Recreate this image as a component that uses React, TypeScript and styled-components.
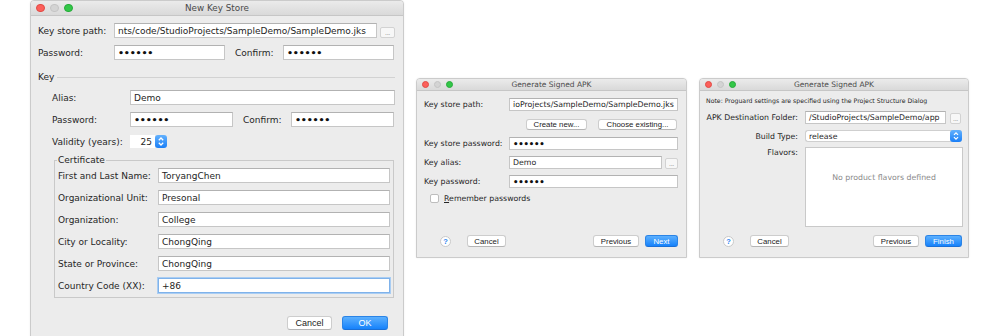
import styled, { createGlobalStyle, css } from "styled-components";

const GlobalStyle = createGlobalStyle`
  html, body {
    margin: 0;
    background: #fff;
  }
  body {
    font-family: "DejaVu Sans", "Liberation Sans", sans-serif;
    color: #262626;
  }
`;

const Lights = ({ size, gap, left }: { size: number; gap: number; left: number }) => (
  <LightRow $gap={gap} $left={left}>
    <Light $size={size} $color="#fc605b" $edge="#e04a45" />
    <Light $size={size} $color="#d4d4d4" $edge="#c4c4c4" />
    <Light $size={size} $color="#33c748" $edge="#27aa3b" />
  </LightRow>
);

const StepperIcon = ({ w, h }: { w: number; h: number }) => (
  <svg width={w} height={h} viewBox="0 0 12 13">
    <path d="M3.8 5.2 L6 3 L8.2 5.2" fill="none" stroke="#fff" strokeWidth="1.3" />
    <path d="M3.8 7.8 L6 10 L8.2 7.8" fill="none" stroke="#fff" strokeWidth="1.3" />
  </svg>
);

const NewKeyStore = () => (
  <Window $w={374} $h={337} $top={0} $fs={9}>
    <TitleBar $h={15}>
      <Lights size={8.5} gap={5.5} left={5} />
      <Title $fs={8.8}>New Key Store</Title>
    </TitleBar>
    <Row $mt={7}>
      <Label $w={76}>Key store path:</Label>
      <Field>nts/code/StudioProjects/SampleDemo/SampleDemo.jks</Field>
      <Browse $w={15} $h={11} $ml={3}>...</Browse>
    </Row>
    <Row $mt={7} $pr={9}>
      <Label $w={76}>Password:</Label>
      <Field $w={111}>
        <Dots>••••••</Dots>
      </Field>
      <Label $w={48} $ml={10}>
        Confirm:
      </Label>
      <Field>
        <Dots>••••••</Dots>
      </Field>
    </Row>
    <Section>Key</Section>
    <Row $mt={6} $pl={21}>
      <Label $w={78}>Alias:</Label>
      <Field>Demo</Field>
    </Row>
    <Row $mt={7} $pl={21} $pr={9}>
      <Label $w={78}>Password:</Label>
      <Field $w={103}>
        <Dots>••••••</Dots>
      </Field>
      <Label $w={48} $ml={10}>
        Confirm:
      </Label>
      <Field>
        <Dots>••••••</Dots>
      </Field>
    </Row>
    <Row $mt={7} $pl={21} $h={15}>
      <Label $w={78}>Validity (years):</Label>
      <SpinField>25</SpinField>
      <Stepper $w={12} $h={13}>
        <StepperIcon w={12} h={13} />
      </Stepper>
    </Row>
    <Group>
      <Legend>Certificate</Legend>
      <Row $pl={0} $pr={0}>
        <Label $w={100}>First and Last Name:</Label>
        <Field>ToryangChen</Field>
      </Row>
      <Row $pl={0} $pr={0}>
        <Label $w={100}>Organizational Unit:</Label>
        <Field>Presonal</Field>
      </Row>
      <Row $pl={0} $pr={0}>
        <Label $w={100}>Organization:</Label>
        <Field>College</Field>
      </Row>
      <Row $pl={0} $pr={0}>
        <Label $w={100}>City or Locality:</Label>
        <Field>ChongQing</Field>
      </Row>
      <Row $pl={0} $pr={0}>
        <Label $w={100}>State or Province:</Label>
        <Field>ChongQing</Field>
      </Row>
      <Row $pl={0} $pr={0}>
        <Label $w={100}>Country Code (XX):</Label>
        <Field $focus>+86</Field>
      </Row>
    </Group>
    <ButtonRow $mt={18} $h={14} $pl={0} $pr={15}>
      <Spacer />
      <PushButton $w={45} $fs={9}>
        Cancel
      </PushButton>
      <PushButton $w={46} $fs={9} $ml={10} $primary>
        OK
      </PushButton>
    </ButtonRow>
  </Window>
);

const SignKeyStep = () => (
  <Window $w={271} $h={180} $top={78} $fs={7.8}>
    <TitleBar $h={12}>
      <Lights size={7} gap={5} left={4.5} />
      <Title $fs={7.5}>Generate Signed APK</Title>
    </TitleBar>
    <Row $mt={7} $h={13}>
      <Label $w={85}>Key store path:</Label>
      <Field>ioProjects/SampleDemo/SampleDemo.jks</Field>
    </Row>
    <ButtonRow $mt={8} $h={11} $pr={9}>
      <Spacer />
      <PushButton $w={61} $fs={7.8}>
        Create new...
      </PushButton>
      <PushButton $w={79} $fs={7.8} $ml={11}>
        Choose existing...
      </PushButton>
    </ButtonRow>
    <Row $mt={7} $h={13}>
      <Label $w={85}>Key store password:</Label>
      <Field>
        <Dots $small>••••••</Dots>
      </Field>
    </Row>
    <Row $mt={6} $h={13}>
      <Label $w={85}>Key alias:</Label>
      <Field>Demo</Field>
      <Browse $w={13} $h={11} $ml={3}>...</Browse>
    </Row>
    <Row $mt={6} $h={13}>
      <Label $w={85}>Key password:</Label>
      <Field>
        <Dots $small>••••••</Dots>
      </Field>
    </Row>
    <Row $mt={4} $h={12} $pl={13}>
      <Check />
      <CheckText>
        <u>R</u>emember passwords
      </CheckText>
    </Row>
    <ButtonRow $mt="auto" $h={12} $pl={23} $pr={8} $mb={10}>
      <Help>?</Help>
      <PushButton $w={39} $fs={7.8} $ml={16}>
        Cancel
      </PushButton>
      <Spacer />
      <PushButton $w={46} $fs={7.8}>
        Previous
      </PushButton>
      <PushButton $w={33} $fs={7.8} $ml={6} $primary>
        Next
      </PushButton>
    </ButtonRow>
  </Window>
);

const SignApkStep = () => (
  <Window $w={270} $h={180} $top={78} $fs={7.8}>
    <TitleBar $h={12}>
      <Lights size={7} gap={5} left={4.5} />
      <Title $fs={7.5}>Generate Signed APK</Title>
    </TitleBar>
    <Note>Note: Proguard settings are specified using the Project Structure Dialog</Note>
    <Row $mt={6} $h={13} $pl={6} $pr={7}>
      <Label $w={99} $right $padR={7}>
        APK Destination Folder:
      </Label>
      <Field>/StudioProjects/SampleDemo/app</Field>
      <Browse $w={11} $h={11} $ml={4}>...</Browse>
    </Row>
    <Row $mt={6} $h={12} $pl={6} $pr={6}>
      <Label $w={99} $right $padR={7}>
        Build Type:
      </Label>
      <Select>
        <SelectText>release</SelectText>
        <Stepper $w={12} $h={12}>
          <StepperIcon w={12} h={12} />
        </Stepper>
      </Select>
    </Row>
    <Row $mt={5} $h={80} $pl={6} $pr={5} $top>
      <Label $w={99} $right $padR={7} $lh={12}>
        Flavors:
      </Label>
      <FlavorBox>No product flavors defined</FlavorBox>
    </Row>
    <ButtonRow $mt="auto" $h={12} $pl={23} $pr={6} $mb={10}>
      <Help>?</Help>
      <PushButton $w={39} $fs={7.8} $ml={16}>
        Cancel
      </PushButton>
      <Spacer />
      <PushButton $w={46} $fs={7.8}>
        Previous
      </PushButton>
      <PushButton $w={37} $fs={7.8} $ml={6} $primary>
        Finish
      </PushButton>
    </ButtonRow>
  </Window>
);

const App = () => (
  <>
    <GlobalStyle />
    <Page>
      <NewKeyStore />
      <SignKeyStep />
      <SignApkStep />
    </Page>
  </>
);

const Page = styled.div`
  width: 1000px;
  height: 336px;
  box-sizing: border-box;
  padding-left: 30px;
  display: flex;
  align-items: flex-start;
  gap: 12px;
  overflow: hidden;
  background: #fff;
`;

const Window = styled.div<{ $w: number; $h: number; $top: number; $fs: number }>`
  width: ${p => p.$w}px;
  height: ${p => p.$h}px;
  margin-top: ${p => p.$top}px;
  flex-shrink: 0;
  box-sizing: border-box;
  display: flex;
  flex-direction: column;
  background: #ececec;
  border: 1px solid #cbcbcb;
  border-radius: 4px 4px 0 0;
  box-shadow: 0 0 2px rgba(0, 0, 0, 0.08);
  font-size: ${p => p.$fs}px;
  overflow: hidden;
`;

const TitleBar = styled.div<{ $h: number }>`
  height: ${p => p.$h}px;
  flex-shrink: 0;
  box-sizing: border-box;
  display: grid;
  grid-template-columns: 1fr auto 1fr;
  align-items: center;
  background: linear-gradient(#ebebeb, #d9d9d9);
  border-bottom: 1px solid #c6c6c6;
`;

const LightRow = styled.div<{ $gap: number; $left: number }>`
  display: flex;
  align-items: center;
  gap: ${p => p.$gap}px;
  margin-left: ${p => p.$left}px;
`;

const Light = styled.span<{ $size: number; $color: string; $edge: string }>`
  width: ${p => p.$size}px;
  height: ${p => p.$size}px;
  border-radius: 50%;
  box-sizing: border-box;
  background: ${p => p.$color};
  border: 0.5px solid ${p => p.$edge};
`;

const Title = styled.div<{ $fs: number }>`
  font-size: ${p => p.$fs}px;
  color: #4a4a4a;
  white-space: nowrap;
`;

const Row = styled.div<{
  $mt?: number | string;
  $h?: number;
  $pl?: number;
  $pr?: number;
  $top?: boolean;
}>`
  display: flex;
  align-items: ${p => (p.$top ? "flex-start" : "center")};
  flex-shrink: 0;
  height: ${p => p.$h ?? 15}px;
  margin-top: ${p => (typeof p.$mt === "string" ? p.$mt : `${p.$mt ?? 0}px`)};
  padding: 0 ${p => p.$pr ?? 8}px 0 ${p => p.$pl ?? 7}px;
`;

const ButtonRow = styled(Row)<{ $mb?: number }>`
  margin-bottom: ${p => p.$mb ?? 0}px;
`;

const Spacer = styled.div`
  flex: 1;
`;

const Label = styled.div<{ $w: number; $ml?: number; $right?: boolean; $padR?: number; $lh?: number }>`
  flex-shrink: 0;
  box-sizing: border-box;
  width: ${p => p.$w}px;
  margin-left: ${p => p.$ml ?? 0}px;
  padding-right: ${p => p.$padR ?? 0}px;
  text-align: ${p => (p.$right ? "right" : "left")};
  white-space: nowrap;
  color: #262626;
  ${p => p.$lh && `line-height: ${p.$lh}px;`}
`;

const Field = styled.div<{ $w?: number; $focus?: boolean }>`
  box-sizing: border-box;
  height: 100%;
  ${p => (p.$w ? `width: ${p.$w}px; flex-shrink: 0;` : "flex: 1; min-width: 0;")}
  display: flex;
  align-items: center;
  padding: 0 3px;
  background: #fff;
  border: 1px solid #c6c6c6;
  border-top-color: #b2b2b2;
  white-space: nowrap;
  overflow: hidden;
  color: #1e1e1e;
  ${p =>
    p.$focus &&
    css`
      border-color: #7fb2ea;
      box-shadow: 0 0 0 1px #a9cdf3;
    `}
`;

const Dots = styled.span<{ $small?: boolean }>`
  font-size: ${p => (p.$small ? 8.5 : 9.5)}px;
  font-weight: bold;
  letter-spacing: -0.2px;
  color: #111;
`;

const Browse = styled.div<{ $w: number; $h: number; $ml: number }>`
  width: ${p => p.$w}px;
  height: ${p => p.$h}px;
  margin-left: ${p => p.$ml}px;
  align-self: flex-end;
  flex-shrink: 0;
  box-sizing: border-box;
  display: flex;
  align-items: flex-end;
  justify-content: center;
  background: #f7f7f7;
  border: 1px solid #d2d2d2;
  border-radius: 2px;
  font-family: "Liberation Sans", Arial, sans-serif;
  font-size: 7px;
  line-height: 8px;
  letter-spacing: -0.3px;
  color: #8e8e8e;
  overflow: hidden;
`;

const Section = styled.div`
  display: flex;
  align-items: center;
  gap: 3px;
  height: 14px;
  margin-top: 10px;
  padding: 0 8px 0 7px;
  &::after {
    content: "";
    flex: 1;
    height: 1px;
    background: #d2d2d2;
  }
`;

const SpinField = styled.div`
  box-sizing: border-box;
  width: 25px;
  height: 13px;
  padding-right: 3px;
  display: flex;
  align-items: center;
  justify-content: flex-end;
  background: #fff;
`;

const Stepper = styled.div<{ $w: number; $h: number }>`
  width: ${p => p.$w}px;
  height: ${p => p.$h}px;
  flex-shrink: 0;
  border-radius: 3px;
  background: linear-gradient(#63b1fd, #1a7ff7);
  display: flex;
`;

const Group = styled.fieldset`
  margin: 5px 9px 0 23px;
  padding: 2px 3px 4px;
  border: 1px solid #c9c9c9;
  display: flex;
  flex-direction: column;
  gap: 7px;
  min-width: 0;
  flex-shrink: 0;
`;

const Legend = styled.legend`
  padding: 0 1px;
  margin-left: -1px;
  line-height: 12px;
  color: #262626;
`;

const PushButton = styled.div<{ $w: number; $fs: number; $ml?: number; $primary?: boolean }>`
  width: ${p => p.$w}px;
  height: 100%;
  margin-left: ${p => p.$ml ?? 0}px;
  flex-shrink: 0;
  box-sizing: border-box;
  display: flex;
  align-items: center;
  justify-content: center;
  border-radius: 3px;
  font-family: "Liberation Sans", Arial, sans-serif;
  font-size: ${p => p.$fs}px;
  white-space: nowrap;
  background: ${p => (p.$primary ? "linear-gradient(#5cb0fe, #1682fb)" : "#fff")};
  border: 1px solid ${p => (p.$primary ? "#2b84e6" : "#cdcdcd")};
  border-bottom-color: ${p => (p.$primary ? "#1a6fd6" : "#b5b5b5")};
  color: ${p => (p.$primary ? "#fff" : "#222")};
`;

const Help = styled.div`
  width: 11px;
  height: 11px;
  flex-shrink: 0;
  box-sizing: border-box;
  border-radius: 50%;
  background: #fff;
  border: 1px solid #c9c9c9;
  display: flex;
  align-items: center;
  justify-content: center;
  font-family: "Liberation Sans", Arial, sans-serif;
  font-weight: bold;
  font-size: 7.5px;
  color: #2d86ee;
`;

const Check = styled.div`
  width: 9px;
  height: 9px;
  flex-shrink: 0;
  box-sizing: border-box;
  border-radius: 2px;
  background: #fff;
  border: 1px solid #bdbdbd;
`;

const CheckText = styled.div`
  margin-left: 5px;
  white-space: nowrap;
`;

const Note = styled.div`
  height: 10px;
  margin-top: 4px;
  padding-left: 6px;
  display: flex;
  align-items: center;
  font-size: 6.2px;
  white-space: nowrap;
  color: #262626;
`;

const Select = styled.div`
  flex: 1;
  height: 100%;
  box-sizing: border-box;
  display: flex;
  align-items: center;
  background: #fff;
  border: 1px solid #cfcfcf;
  border-right: none;
  border-radius: 3px;
`;

const SelectText = styled.div`
  flex: 1;
  padding-left: 3px;
`;

const FlavorBox = styled.div`
  flex: 1;
  height: 100%;
  box-sizing: border-box;
  padding-top: 25px;
  text-align: center;
  line-height: 10px;
  background: #fff;
  border: 1px solid #c9c9c9;
  color: #8a8a8a;
  white-space: nowrap;
`;

export default App;
